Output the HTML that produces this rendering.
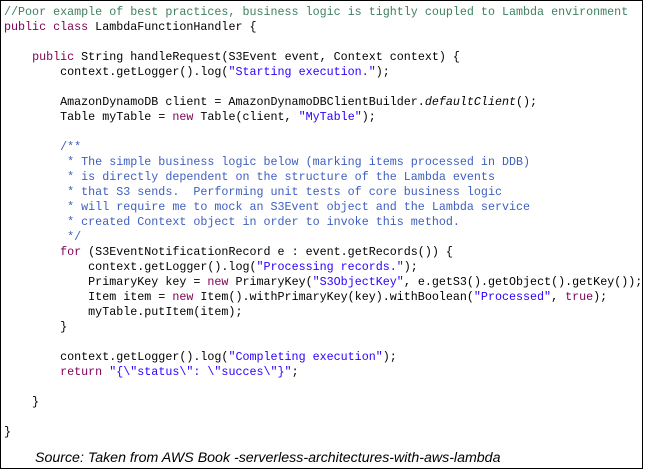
<!DOCTYPE html>
<html><head><meta charset="utf-8"><style>
html,body{margin:0;padding:0;background:#fff;width:649px;height:470px;overflow:hidden}
.box{position:absolute;left:0;top:0;width:641px;height:467px;border:1px solid #000}
pre{position:absolute;left:4px;top:5px;margin:0;font-family:"Liberation Mono",monospace;font-size:11.7px;line-height:15px;color:#000;white-space:pre}
.c{color:#3f7f5f}.k{color:#7f0055}.s{color:#2a00ff}.d{color:#3f5fbf}.i{font-style:italic}
.src{position:absolute;left:35px;top:450px;font-family:"Liberation Sans",sans-serif;font-style:italic;font-size:14.2px;color:#000}
</style></head><body>
<div class="box"></div>
<pre><span class="c">//Poor example of best practices, business logic is tightly coupled to Lambda environment</span>
<span class="k">public class</span> LambdaFunctionHandler {

    <span class="k">public</span> String handleRequest(S3Event event, Context context) {
        context.getLogger().log(<span class="s">"Starting execution."</span>);

        AmazonDynamoDB client = AmazonDynamoDBClientBuilder.<span class="i">defaultClient</span>();
        Table myTable = <span class="k">new</span> Table(client, <span class="s">"MyTable"</span>);

<span class="d">        /**
         * The simple business logic below (marking items processed in DDB)
         * is directly dependent on the structure of the Lambda events
         * that S3 sends.  Performing unit tests of core business logic
         * will require me to mock an S3Event object and the Lambda service
         * created Context object in order to invoke this method.
         */</span>
        <span class="k">for</span> (S3EventNotificationRecord e : event.getRecords()) {
            context.getLogger().log(<span class="s">"Processing records."</span>);
            PrimaryKey key = <span class="k">new</span> PrimaryKey(<span class="s">"S3ObjectKey"</span>, e.getS3().getObject().getKey());
            Item item = <span class="k">new</span> Item().withPrimaryKey(key).withBoolean(<span class="s">"Processed"</span>, <span class="k">true</span>);
            myTable.putItem(item);
        }

        context.getLogger().log(<span class="s">"Completing execution"</span>);
        <span class="k">return</span> <span class="s">"{\"status\": \"succes\"}"</span>;

    }

}</pre>
<div class="src">Source: Taken from AWS Book -serverless-architectures-with-aws-lambda</div>
</body></html>
